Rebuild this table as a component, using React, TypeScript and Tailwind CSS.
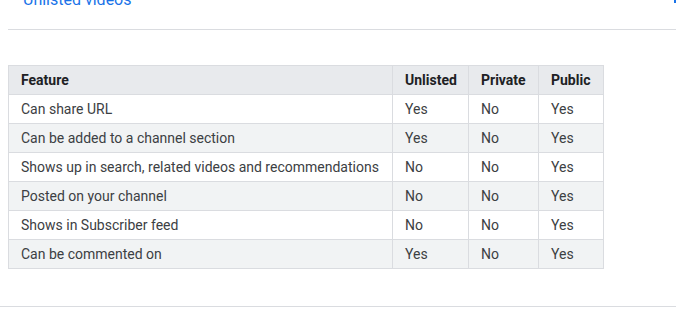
import React from "react";

const rows: [string, string, string, string][] = [
  ["Can share URL", "Yes", "No", "Yes"],
  ["Can be added to a channel section", "Yes", "No", "Yes"],
  ["Shows up in search, related videos and recommendations", "No", "No", "Yes"],
  ["Posted on your channel", "No", "No", "Yes"],
  ["Shows in Subscriber feed", "No", "No", "Yes"],
  ["Can be commented on", "Yes", "No", "Yes"],
];

export default function App() {
  return (
    <div
      className="w-[676px] h-[322px] overflow-hidden bg-white"
      style={{ fontFamily: "Roboto, 'Liberation Sans', sans-serif" }}
    >
      <div className="pl-2">
        <div className="flex items-start justify-between h-[30px] border-b border-[#dadce0]">
          <span className="pl-[15px] text-[16px] leading-[20px] text-[#1a73e8] -mt-[10px]">Unlisted videos</span>
          <span className="w-[2px] h-[3px] bg-[#1a73e8]" />
        </div>
        <div className="h-[35px]" />
        <table className="table-fixed border-collapse text-[14px] text-[#3c4043] w-[595px]">
          <colgroup>
            <col className="w-[384px]" />
            <col className="w-[76px]" />
            <col className="w-[70px]" />
            <col className="w-[65px]" />
          </colgroup>
          <thead>
            <tr className="bg-[#e8eaed] h-[29px]">
              {["Feature", "Unlisted", "Private", "Public"].map((h) => (
                <th
                  key={h}
                  className="border border-[#dadce0] px-3 py-0 text-left font-bold text-[#202124] leading-[20px]"
                >
                  {h}
                </th>
              ))}
            </tr>
          </thead>
          <tbody>
            {rows.map((r, i) => (
              <tr key={i} className={`h-[29px] ${i % 2 === 1 ? "bg-[#f1f3f4]" : "bg-white"}`}>
                {r.map((c, j) => (
                  <td key={j} className="border border-[#dadce0] px-3 py-0 leading-[20px] whitespace-nowrap">
                    {c}
                  </td>
                ))}
              </tr>
            ))}
          </tbody>
        </table>
      </div>
      <div className="mt-[37px] border-t border-[#dadce0]" />
    </div>
  );
}
